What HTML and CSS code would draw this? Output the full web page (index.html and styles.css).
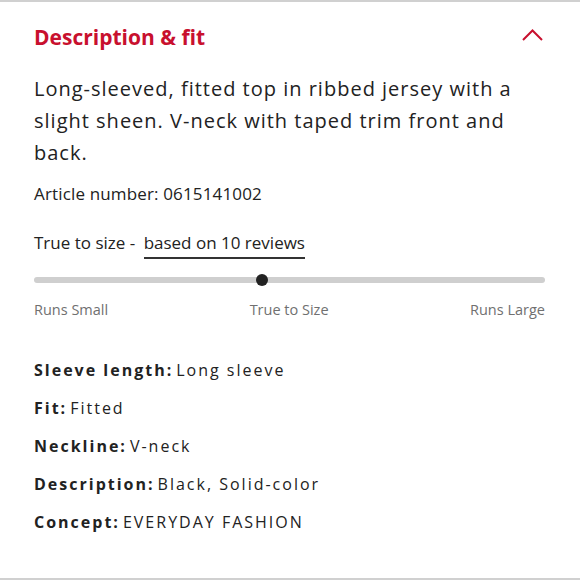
FILE: index.html
```html
<!DOCTYPE html>
<html>
<head>
<meta charset="utf-8">
<link rel="stylesheet" href="styles.css">
</head>
<body>
<section class="panel">
  <header class="panel-head">
    <h2 class="panel-title">Description &amp; fit</h2>
    <svg class="chevron" width="21" height="14" viewBox="0 0 21 14"><path d="M1 12 L10.5 2.5 L20 12" fill="none" stroke="#c8102e" stroke-width="2"/></svg>
  </header>
  <p class="desc">Long-sleeved, fitted top in ribbed jersey with a slight sheen. V-neck with taped trim front and back.</p>
  <p class="article">Article number: 0615141002</p>
  <p class="fit-line">True to size - <span class="reviews">based on 10 reviews</span></p>
  <div class="slider">
    <div class="track"><span class="knob"></span></div>
    <div class="scale"><span>Runs Small</span><span>True to Size</span><span>Runs Large</span></div>
  </div>
  <dl class="specs">
    <div class="spec"><dt>Sleeve length:</dt><dd>Long sleeve</dd></div>
    <div class="spec"><dt>Fit:</dt><dd>Fitted</dd></div>
    <div class="spec"><dt>Neckline:</dt><dd>V-neck</dd></div>
    <div class="spec"><dt>Description:</dt><dd>Black, Solid-color</dd></div>
    <div class="spec"><dt>Concept:</dt><dd>EVERYDAY FASHION</dd></div>
  </dl>
</section>
</body>
</html>
```

FILE: styles.css
```css
* { box-sizing: border-box; }
html, body { margin: 0; padding: 0; background: #fff; }
body { font-family: "Open Sans", "Noto Sans", sans-serif; color: #222; }
.panel {
  width: 580px;
  height: 580px;
  border-top: 2px solid #d0d0d0;
  border-bottom: 2px solid #d0d0d0;
  padding: 20px 35px 0 34px;
}
.panel-head {
  display: flex;
  justify-content: space-between;
  align-items: center;
  height: 30px;
}
.panel-title {
  margin: 0;
  font-size: 21px;
  font-weight: 700;
  color: #c8102e;
}
.chevron { margin-right: 2px; margin-top: -4px; }
.desc {
  margin: 21px 0 0;
  font-size: 20px;
  line-height: 32px;
  letter-spacing: 1px;
  color: #222;
}
.article {
  margin: 14px 0 0;
  font-size: 17px;
  line-height: 22px;
  letter-spacing: 0.15px;
}
.fit-line {
  margin: 27px 0 0;
  font-size: 17px;
  line-height: 22px;
}
.reviews {
  margin-left: 4px;
  border-bottom: 2px solid #333;
  padding-bottom: 3px;
}
.slider { margin-top: 23px; }
.track {
  position: relative;
  height: 6px;
  border-radius: 3px;
  background: #cfcfcf;
}
.knob {
  position: absolute;
  left: 222px;
  top: -3px;
  width: 12px;
  height: 12px;
  border-radius: 50%;
  background: #222;
}
.scale {
  display: flex;
  justify-content: space-between;
  margin-top: 17px;
  font-size: 14.5px;
  color: #707070;
}
.specs { margin: 40px 0 0; }
.spec {
  display: flex;
  gap: 3px;
  font-size: 16px;
  line-height: 22px;
  letter-spacing: 2px;
  margin-bottom: 16px;
}
.spec dt { font-weight: 700; }
.spec dd { margin: 0; }
```
